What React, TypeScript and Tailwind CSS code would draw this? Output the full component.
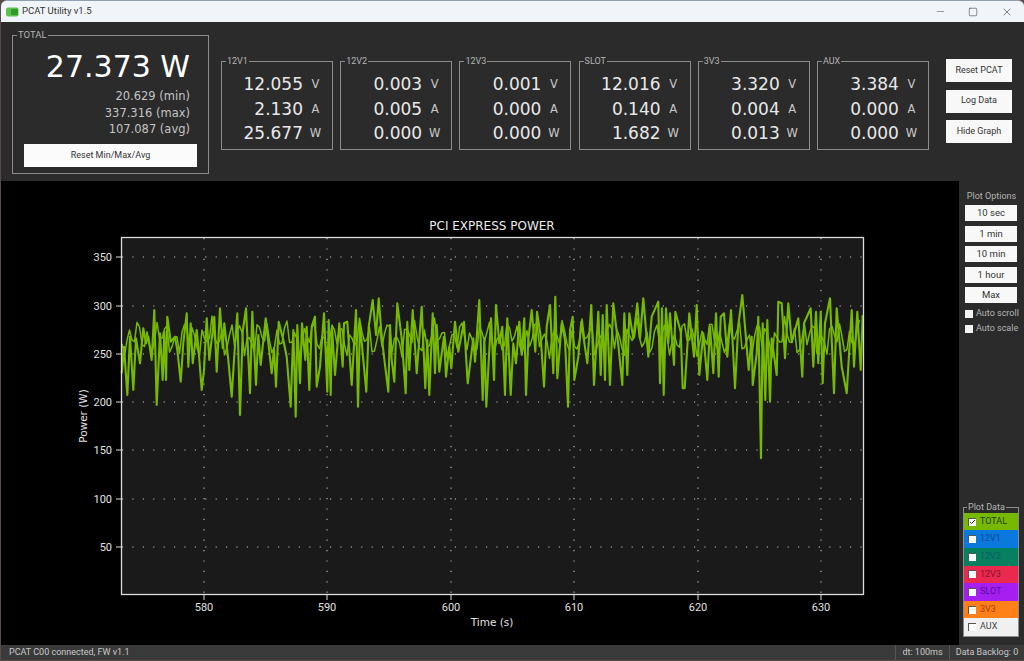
import React from 'react';
import { Minus, Square, X, Check } from 'lucide-react';

// trace of the power line, read off the screenshot (page x/y = base + value / 3)
const traceA = [5,280,12,200,22,345,30,170,40,330,48,175,60,250,70,145,78,190,85,170,95,240,103,90,110,375,120,160,128,300,133,155,138,300,142,110,152,185,165,170,172,210,182,305,190,190,200,100,205,260,212,130,218,250,230,150,236,215,245,330,252,270,260,115,268,240,283,110,290,275,300,85,308,205,313,130,325,240,335,350,342,240,352,100,360,405,368,155,378,85,390,340,397,95,408,315,415,165,422,255,437,115,455,280,462,205,468,320,476,125,490,180,500,230,512,380,520,150,527,410,532,135,540,310,546,130,556,240,560,140,568,330,575,140,585,110,590,320,600,260,612,100,622,335,626,120,632,345,636,145,645,285,658,130,668,260,672,130,682,125,695,315,708,90,714,380,720,130,730,240,739,335,746,140,758,60,768,165,776,55,785,170,795,255,805,335];
const traceB = [0,135,5,240,13,305,22,70,35,175,47,340,52,125,58,270,68,90,80,280,95,80,106,325,112,180,118,345,128,100,135,280,140,135,148,275,162,170,168,290,178,200,184,265,195,125,205,215,222,125,233,310,250,175,255,245,268,60,278,360,283,175,289,380,303,115,312,300,318,75,328,190,337,140,345,345,352,115,362,345,370,190,378,250,388,125,395,225,403,115,408,345,415,180,425,90,436,215,441,95,452,170,462,320,470,140,480,75,490,280,496,50,502,295,515,130,525,180,534,380,540,150,548,110,553,300,565,230,574,125,592,250,604,75,612,315,625,95,632,285,638,105,645,300,650,75,660,315,670,70,685,195,697,315,703,100,712,285,718,100,730,175,742,70,750,175,760,55,775,230];
const traceC = [5,110,25,65,30,310,36,85,41,345,48,85,55,190,60,100,72,255,76,95,92,155,98,325,104,325,112,200,118,100,132,230,140,75,148,285,160,160,172,300,180,140,190,280,198,100,206,290,212,110,222,100,232,230,243,90,255,325,265,135,277,45,296,270,305,170,308,315,320,220,325,110,333,535,338,130,346,360,352,120,360,365,365,175,380,285,385,65,395,70,405,235,415,70,425,185,445,115,457,290,462,130,482,85,490,260,498,95,505,250,512,95,518,310,525,130,540,55,552,340,560,85,575,260,590,340,605,90,612,260,622,95,632,270,638,105];

const toPoints = (vals: number[], baseX: number): string => {
  const out: string[] = [];
  for (let i = 0; i < vals.length; i += 2) {
    out.push(`${(baseX + vals[i] / 3).toFixed(1)},${(280 + vals[i + 1] / 3).toFixed(1)}`);
  }
  return out.join(' ');
};
const tracePoints = [toPoints(traceA, 120), toPoints(traceB, 390), toPoints(traceC, 650)].join(' ');

// the small jitter that fills the middle of the band
const bandPoints = Array.from({ length: 296 }, (_, i) => {
  const x = 122 + i * 2.5;
  const y = 338 + 11 * Math.sin(i * 1.7) + 7 * Math.sin(i * 0.63 + 1) + 4 * Math.sin(i * 3.1);
  return `${x.toFixed(1)},${y.toFixed(1)}`;
}).join(' ');

const channels = [
  { name: '12V1', v: '12.055', a: '2.130', w: '25.677' },
  { name: '12V2', v: '0.003', a: '0.005', w: '0.000' },
  { name: '12V3', v: '0.001', a: '0.000', w: '0.000' },
  { name: 'SLOT', v: '12.016', a: '0.140', w: '1.682' },
  { name: '3V3', v: '3.320', a: '0.004', w: '0.013' },
  { name: 'AUX', v: '3.384', a: '0.000', w: '0.000' },
];

const plotRows = [
  { name: 'TOTAL', cls: 'bg-[#76b900] text-[#24400a]', on: true },
  { name: '12V1', cls: 'bg-[#0a78dc] text-[#0c4a96]', on: false },
  { name: '12V2', cls: 'bg-[#07805f] text-[#0b5a6a]', on: false },
  { name: '12V3', cls: 'bg-[#e92a4e] text-[#8c1030]', on: false },
  { name: 'SLOT', cls: 'bg-[#a41ff0] text-[#5a10a0]', on: false },
  { name: '3V3', cls: 'bg-[#ff8018] text-[#a83c08]', on: false },
  { name: 'AUX', cls: 'bg-[#f0f0f0] text-[#444444]', on: false },
];

const yTicks = [
  { label: '350', y: 257 },
  { label: '300', y: 306 },
  { label: '250', y: 354 },
  { label: '200', y: 402 },
  { label: '150', y: 450 },
  { label: '100', y: 499 },
  { label: '50', y: 547 },
];
const xTicks = [
  { label: '580', x: 204 },
  { label: '590', x: 327 },
  { label: '600', x: 451 },
  { label: '610', x: 574 },
  { label: '620', x: 698 },
  { label: '630', x: 821 },
];

const Channel = ({ name, v, a, w }: { name: string; v: string; a: string; w: string }) => (
  <div className="relative w-[112px] h-[89px] border border-[#8c8c8c] pt-[10.5px] pr-[4px]">
    <span className="absolute left-[4px] top-[-7px] bg-[#2b2b2b] px-px text-[9px] leading-[12px] text-[#b4b4b4]">{name}</span>
    {[[v, 'V'], [a, 'A'], [w, 'W']].map(([val, unit]) => (
      <div key={unit} className="flex items-center h-[24.5px]">
        <span className="w-[81px] text-right text-[17px] text-[#e8e8e8] font-['DejaVu_Sans',sans-serif]">{val}</span>
        <span className="flex-1 text-center text-[11.5px] text-[#c8c8c8] font-['DejaVu_Sans',sans-serif]">{unit}</span>
      </div>
    ))}
  </div>
);

const SideButton = ({ label }: { label: string }) => (
  <button className="w-[66px] h-[23px] bg-[#f8f8f8] text-[9px] text-[#333333]">{label}</button>
);

const PlotButton = ({ label }: { label: string }) => (
  <button className="w-[52px] h-[16px] bg-[#f8f8f8] text-[9.5px] leading-[16px] text-[#333333]">{label}</button>
);

const App: React.FC = () => {
  return (
    <div className="w-[1024px] h-[661px] overflow-hidden bg-[#5a4a48] pl-px pb-px font-['Roboto',sans-serif]">
      <div className="flex flex-col h-full">
        {/* title bar */}
        <div className="flex items-center h-[22px] shrink-0 bg-[#f1f5fa] border-t border-[#8fa0b0] rounded-tl-[6px] rounded-tr-[6px] pl-[5px]">
          <svg width="13" height="10" viewBox="0 0 13 10" className="mr-[3px]">
            <rect x="0" y="0.5" width="12.5" height="9" rx="2" fill="#5cc04a" />
            <rect x="5" y="2" width="7" height="6" rx="1" fill="#2f9a2c" />
          </svg>
          <span className="text-[9.5px] text-[#333333]">PCAT Utility v1.5</span>
          <div className="ml-auto flex items-center text-[#333333]">
            <Minus size={11} strokeWidth={1} className="mr-[22px]" />
            <Square size={10} strokeWidth={1.3} className="mr-[23px]" />
            <X size={12} strokeWidth={1.2} className="mr-[11px]" />
          </div>
        </div>

        {/* readouts */}
        <div className="flex h-[159px] shrink-0 bg-[#2b2b2b] pl-[11px] pt-[13px]">
          <div className="relative w-[197px] h-[139px] border border-[#8c8c8c] pr-[18px] pt-[14px]">
            <span className="absolute left-[4px] top-[-7px] bg-[#2b2b2b] px-px text-[9.5px] leading-[12px] text-[#b4b4b4]">TOTAL</span>
            <div className="text-right text-[30px] leading-[34px] text-white font-['DejaVu_Sans',sans-serif]">27.373 W</div>
            <div className="mt-[4px] text-right text-[11.5px] leading-[16.5px] text-[#c4c4c4] font-['DejaVu_Sans',sans-serif]">
              <div>20.629 (min)</div>
              <div>337.316 (max)</div>
              <div>107.087 (avg)</div>
            </div>
            <button className="absolute left-[11px] top-[108px] w-[173px] h-[23px] bg-[#fbfbfb] text-[9px] text-[#333333]">Reset Min/Max/Avg</button>
          </div>
          <div className="flex gap-[7.2px] ml-[12px] mt-[26px] h-[89px]">
            {channels.map((c) => (
              <Channel key={c.name} {...c} />
            ))}
          </div>
          <div className="flex flex-col gap-[7.5px] ml-[17px] mt-[24px]">
            <SideButton label="Reset PCAT" />
            <SideButton label="Log Data" />
            <SideButton label="Hide Graph" />
          </div>
        </div>

        {/* plot + sidebar */}
        <div className="flex flex-1 min-h-0">
          <div className="w-[958px] h-full bg-black">
            <svg width="958" height="464" viewBox="1 181 958 464" className="block font-['DejaVu_Sans',sans-serif]">
              <rect x="121" y="237" width="743" height="358" fill="#1a1a1a" />
              {yTicks.map((t) => (
                <g key={t.label}>
                  <line x1="122" x2="863" y1={t.y} y2={t.y} stroke="#c4c4c4" strokeWidth="1.1" strokeDasharray="1.2 9.2" />
                  <line x1="116" x2="121" y1={t.y} y2={t.y} stroke="#dddddd" />
                  <text x="112" y={t.y + 4} textAnchor="end" fontSize="11" fill="#e0e0e0" className="font-['Roboto',sans-serif]">{t.label}</text>
                </g>
              ))}
              {xTicks.map((t) => (
                <g key={t.label}>
                  <line x1={t.x} x2={t.x} y1="238" y2="594" stroke="#c4c4c4" strokeWidth="1.1" strokeDasharray="1.2 9.2" />
                  <line x1={t.x} x2={t.x} y1="595" y2="600" stroke="#dddddd" />
                  <text x={t.x} y="611" textAnchor="middle" fontSize="11" fill="#e0e0e0" className="font-['Roboto',sans-serif]">{t.label}</text>
                </g>
              ))}
              <polyline points={bandPoints} fill="none" stroke="#76b900" strokeWidth="1.5" strokeLinejoin="round" />
              <polyline points={tracePoints} fill="none" stroke="#76b900" strokeWidth="2.1" strokeLinejoin="round" />
              <rect x="121.5" y="237.5" width="742" height="357" fill="none" stroke="#dcdcdc" strokeWidth="1.3" />
              <text x="492" y="230" textAnchor="middle" fontSize="12" fill="#ececec">PCI EXPRESS POWER</text>
              <text x="492" y="626" textAnchor="middle" fontSize="10.5" fill="#e0e0e0">Time (s)</text>
              <text x="0" y="0" transform="translate(87 416) rotate(-90)" textAnchor="middle" fontSize="10.5" fill="#e0e0e0">Power (W)</text>
            </svg>
          </div>
          <div className="flex-1 flex flex-col bg-[#2b2b2b] pl-[6px]">
            <div className="text-center text-[9px] leading-[12px] text-[#b4b4b4] mt-[9px] mb-[3px] pr-[6px]">Plot Options</div>
            <div className="flex flex-col gap-[4.5px]">
              <PlotButton label="10 sec" />
              <PlotButton label="1 min" />
              <PlotButton label="10 min" />
              <PlotButton label="1 hour" />
              <PlotButton label="Max" />
            </div>
            <div className="flex flex-col gap-[6px] mt-[6px]">
              {['Auto scroll', 'Auto scale'].map((l) => (
                <div key={l} className="flex items-center gap-[3px] h-[9px] text-[9px] whitespace-nowrap text-[#b4b4b4]">
                  <span className="w-[8px] h-[8px] bg-[#f4f4f4] shrink-0" />
                  {l}
                </div>
              ))}
            </div>
            <div className="relative mt-auto mb-[8px] ml-[-2px] w-[56px] border border-[#8c8c8c] pt-[5px]">
              <span className="absolute left-[3px] top-[-7px] bg-[#2b2b2b] px-px text-[9px] leading-[12px] text-[#b4b4b4]">Plot Data</span>
              {plotRows.map((r) => (
                <div key={r.name} className={`flex items-center h-[17.6px] pl-[4px] gap-[4px] text-[9px] ${r.cls}`}>
                  <span className="flex items-center justify-center w-[8px] h-[8px] bg-white border-l border-t border-[#555555]">
                    {r.on && <Check size={8} strokeWidth={3} className="text-black" />}
                  </span>
                  {r.name}
                </div>
              ))}
            </div>
          </div>
        </div>

        {/* status bar */}
        <div className="flex items-center h-[15px] shrink-0 bg-[#3a3a3a] text-[9px] text-[#c8c8c8]">
          <span className="pl-[8px]">PCAT C00 connected, FW v1.1</span>
          <span className="ml-auto w-[54px] h-full text-center leading-[15px] border-l border-[#555555]">dt: 100ms</span>
          <span className="w-[75px] h-full text-center leading-[15px] border-l border-[#555555]">Data Backlog: 0</span>
        </div>
      </div>
    </div>
  );
};

export default App;
